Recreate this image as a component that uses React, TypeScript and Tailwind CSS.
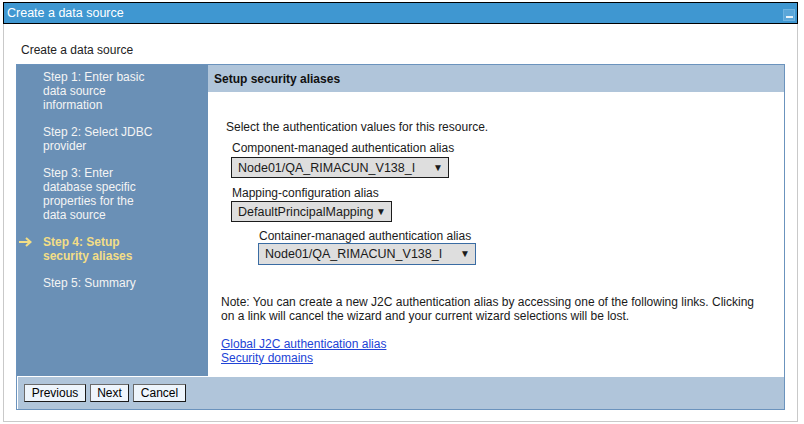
import React from "react";

const steps: { lines: string; active?: boolean }[] = [
  { lines: "Step 1: Enter basic data source information" },
  { lines: "Step 2: Select JDBC provider" },
  { lines: "Step 3: Enter database specific properties for the data source" },
  { lines: "Step 4: Setup security aliases", active: true },
  { lines: "Step 5: Summary" },
];

function Arrow() {
  return (
    <svg width="14" height="10" viewBox="0 0 14 10" className="block">
      <path d="M1 5 H12" stroke="#f3de86" strokeWidth="2" fill="none" />
      <path d="M8 1 L12.5 5 L8 9" stroke="#f3de86" strokeWidth="2" fill="none" />
    </svg>
  );
}

function FakeSelect({ text, w, focused }: { text: string; w: string; focused?: boolean }) {
  return (
    <div
      className={`${w} flex items-center justify-between bg-[#dedede] pl-[6px] pr-[5px] border ${
        focused ? "border-[#3a6ca3] h-[22px]" : "border-[#1c1c1c] h-[21px]"
      }`}
    >
      <span className="leading-[14px] text-[12.5px]">{text}</span>
      <span className="text-[10px] leading-none">▼</span>
    </div>
  );
}

function Btn({ label, w }: { label: string; w: string }) {
  return (
    <div
      className={`${w} h-[18px] flex items-center justify-center bg-[#eef5fc] border border-[#6a6a6a] border-r-[#1a1a1a] border-b-[#1a1a1a] text-[12px] leading-[14px] text-black`}
    >
      {label}
    </div>
  );
}

export default function App() {
  return (
    <div className="w-[804px] h-[424px] bg-white pt-[2px] pl-[3px] font-['Liberation_Sans',Arial,sans-serif] text-[12px] text-[#1a1a1a]">
      {/* title bar */}
      <div className="w-[795px] h-[22px] border border-black bg-[#3f97d1] flex items-center justify-between pl-[3px] pr-[2px]">
        <span className="text-white text-[12.5px] leading-[14px]">Create a data source</span>
        <div className="w-[12px] h-[12px] bg-[#5aa6d9] border border-[#6fb3e0] flex items-end justify-center pb-[2px] mt-[3px]">
          <div className="w-[7px] h-[2px] bg-[#e8f3fb]" />
        </div>
      </div>
      {/* panel */}
      <div className="w-[795px] h-[398px] border-x border-b border-[#c9c9c9] pl-[12px]">
        <div className="pt-[19px] pl-[5px] leading-[14px] text-[#222]">Create a data source</div>
        <div className="mt-[7px] w-[769px] h-[346px] border border-[#6b93bd] flex flex-col">
          <div className="flex flex-1">
            {/* nav */}
            <div className="w-[191px] bg-[#6a90b6] pt-[5px] flex flex-col gap-[13px]">
              {steps.map((s, i) => (
                <div key={i} className="flex">
                  <div className="w-[26px] h-[14px] flex items-center pl-[1px]">{s.active ? <Arrow /> : null}</div>
                  <div
                    className={`w-[114px] leading-[14px] ${
                      s.active ? "text-[#f3de86] font-bold" : "text-[#f4f4f4]"
                    }`}
                  >
                    {s.lines}
                  </div>
                </div>
              ))}
            </div>
            {/* right column */}
            <div className="flex-1 flex flex-col">
              <div className="h-[27px] bg-[#b0c5da] pl-[6px] flex items-center font-bold text-[#111]">
                Setup security aliases
              </div>
              <div className="flex-1 bg-white">
                <div className="pt-[28px] pl-[18px] leading-[14px]">
                  Select the authentication values for this resource.
                </div>
                <div className="mt-[7px] pl-[24px] leading-[14px]">Component-managed authentication alias</div>
                <div className="mt-[2px] pl-[23px]">
                  <FakeSelect text="Node01/QA_RIMACUN_V138_I" w="w-[218px]" />
                </div>
                <div className="mt-[8px] pl-[24px] leading-[14px]">Mapping-configuration alias</div>
                <div className="mt-[1px] pl-[23px]">
                  <FakeSelect text="DefaultPrincipalMapping" w="w-[161px]" />
                </div>
                <div className="mt-[7px] pl-[51px] leading-[14px]">Container-managed authentication alias</div>
                <div className="mt-[0px] pl-[50px]">
                  <FakeSelect text="Node01/QA_RIMACUN_V138_I" w="w-[218px]" focused />
                </div>
                <div className="mt-[30px] pl-[13px] w-[556px] leading-[14px]">
                  Note: You can create a new J2C authentication alias by accessing one of the following links.
                  Clicking on a link will cancel the wizard and your current wizard selections will be lost.
                </div>
                <div className="mt-[14px] pl-[13px] flex flex-col items-start leading-[14px]">
                  <a className="text-[#2143d6] underline">Global J2C authentication alias</a>
                  <a className="text-[#2143d6] underline">Security domains</a>
                </div>
              </div>
            </div>
          </div>
          {/* footer */}
          <div className="h-[33px] bg-[#b0c5da] border-t border-l border-t-white border-l-white flex items-center pl-[6px] gap-[4px]">
            <Btn label="Previous" w="w-[62px]" />
            <Btn label="Next" w="w-[39px]" />
            <Btn label="Cancel" w="w-[53px]" />
          </div>
        </div>
      </div>
    </div>
  );
}
